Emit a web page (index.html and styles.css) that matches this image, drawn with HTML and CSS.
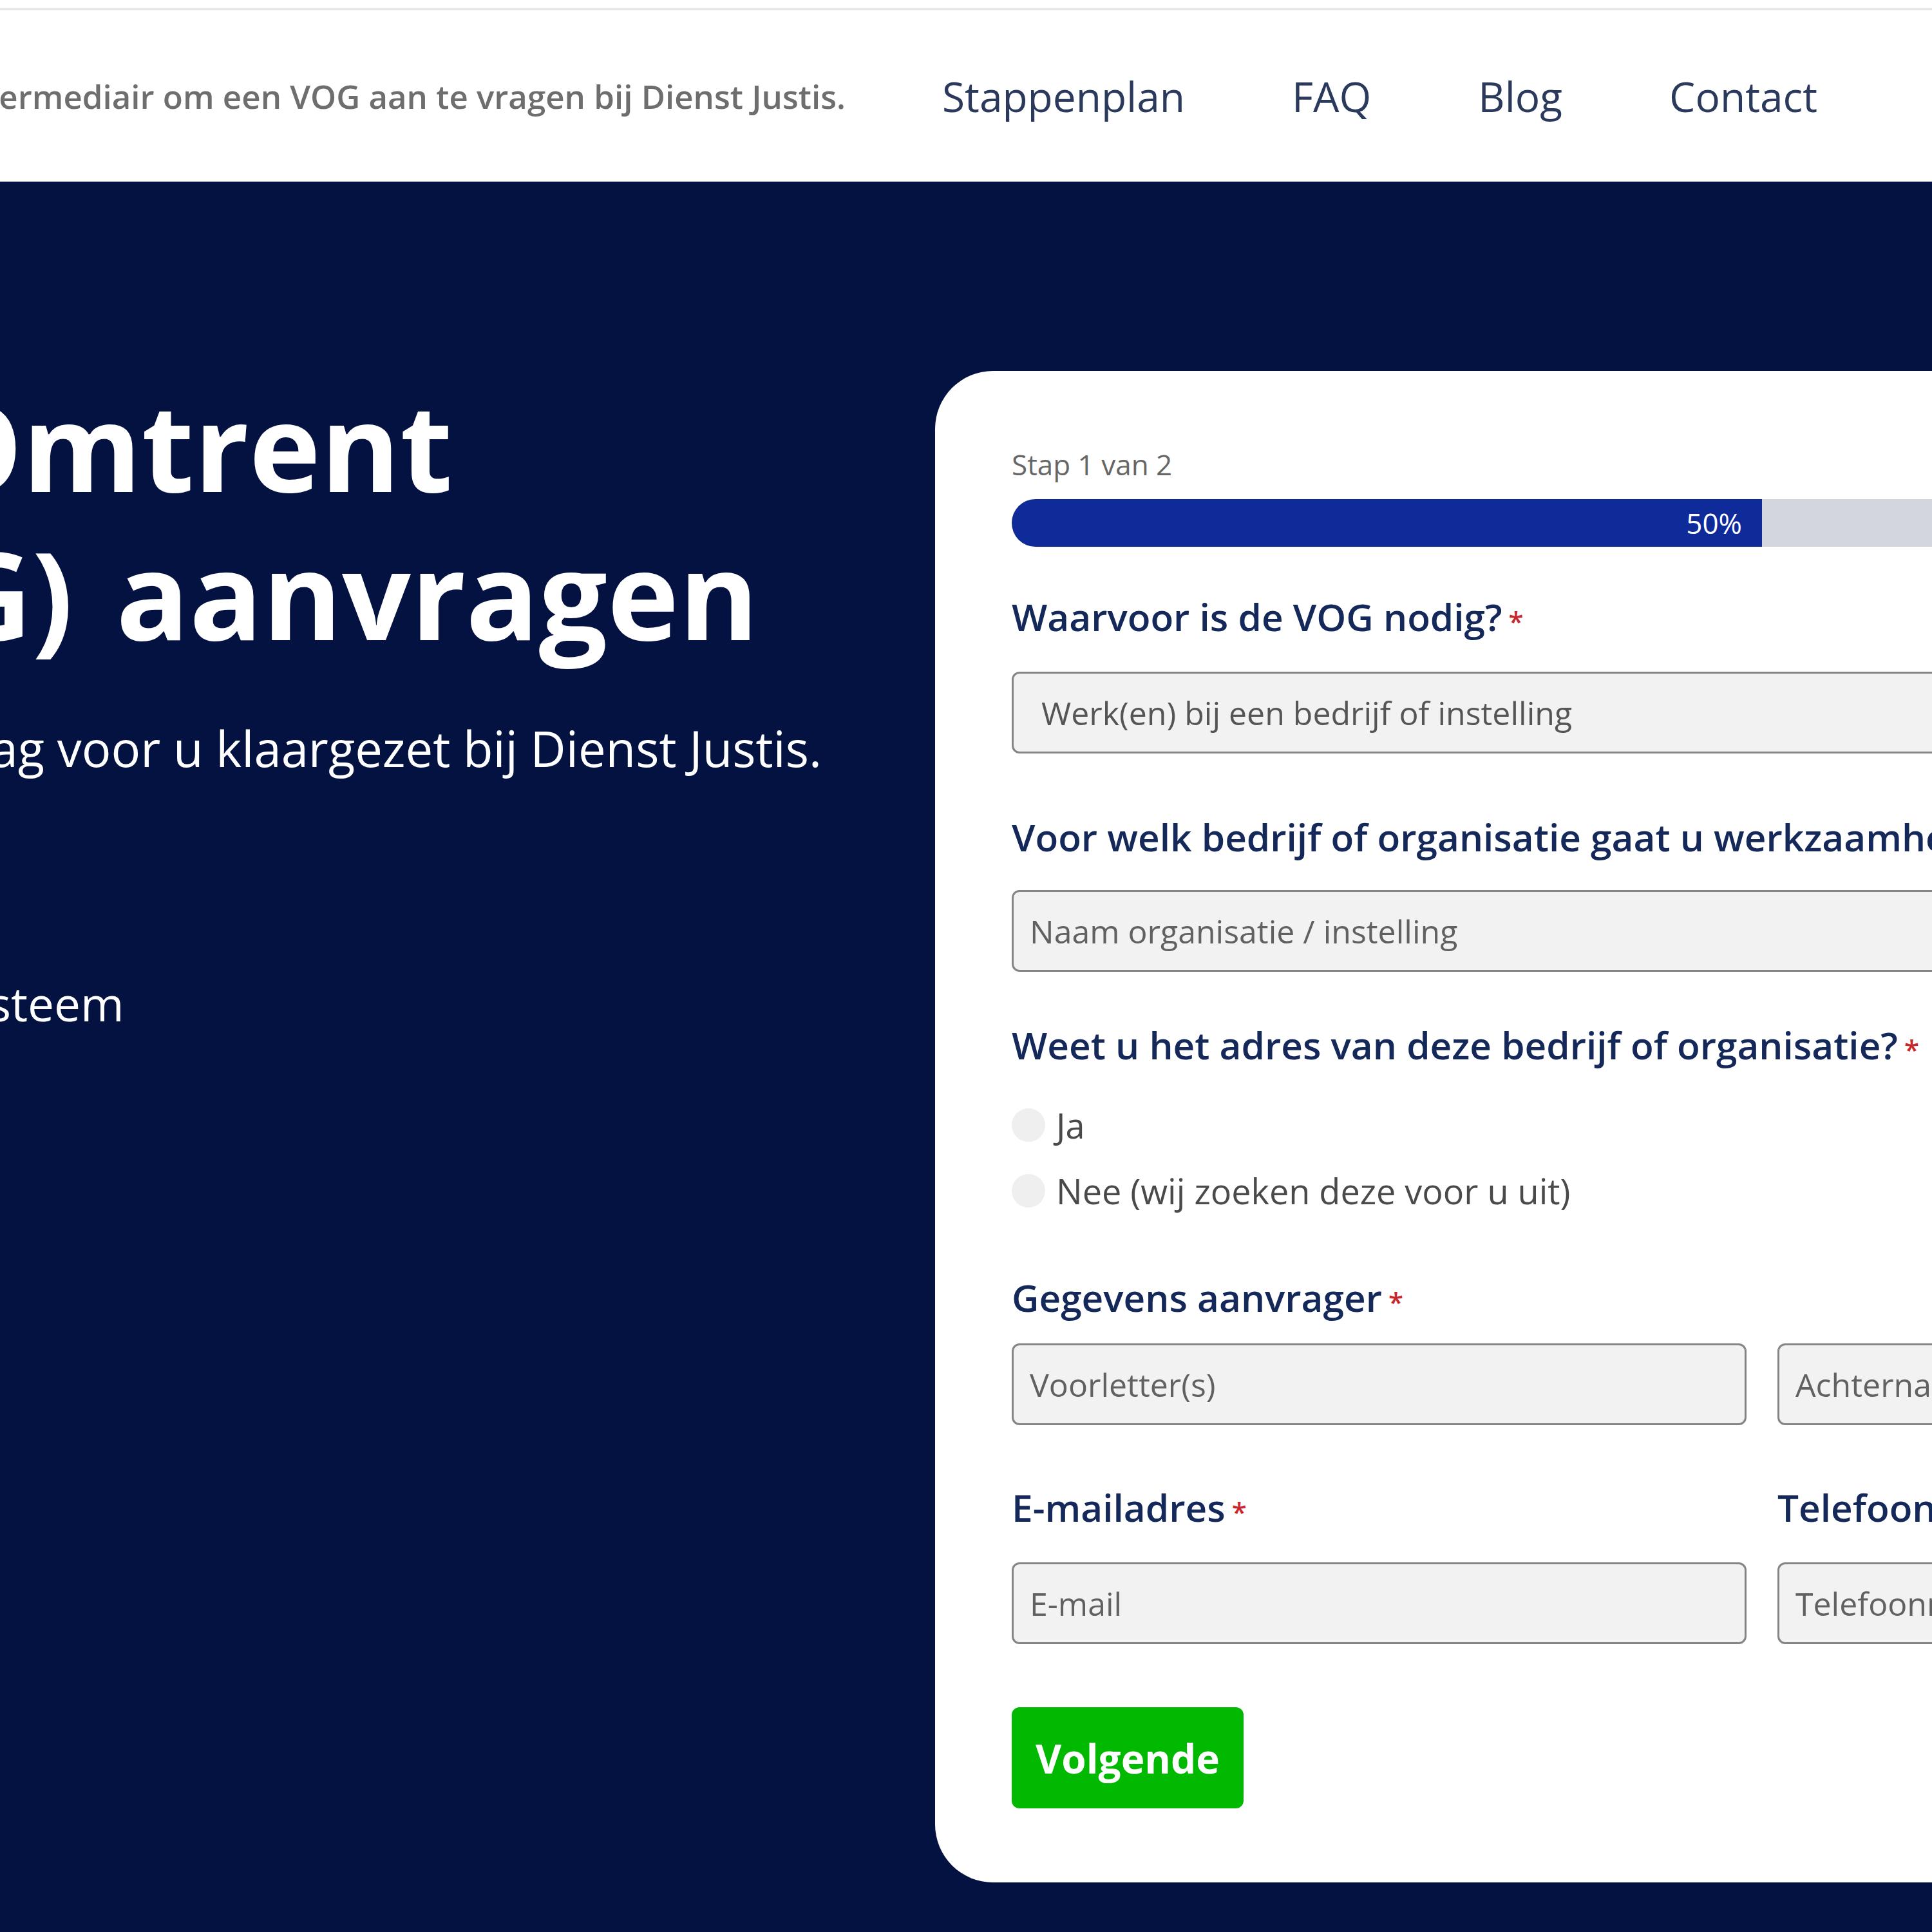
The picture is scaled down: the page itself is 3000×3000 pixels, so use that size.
FILE: index.html
```html
<!DOCTYPE html>
<html lang="nl">

<head>
    <meta charset="UTF-8" />
    <title>VOG aanvragen</title>
    <link rel="stylesheet" href="styles.css">
</head>

<body>

    <header class="site-header">
        <p class="tagline">VOG Aanvragen Online is uw intermediair om een VOG aan te vragen bij Dienst Justis.</p>
        <nav class="main-nav">
            <a href="#">Stappenplan</a>
            <a href="#">FAQ</a>
            <a href="#">Blog</a>
            <a href="#">Contact</a>
        </nav>
    </header>

    <section class="hero">
        <div class="hero-text">
            <h1>Verklaring Omtrent<br>Gedrag (VOG) aanvragen</h1>
            <p class="lead">Na uw betaling wordt uw aanvraag voor u klaargezet bij Dienst Justis.</p>
            <ul class="usps">
                <li>Snel geregeld</li>
                <li>Hulp bij elke stap</li>
                <li>Betalen via een beveiligd betaalsysteem</li>
            </ul>
        </div>

        <form class="form-card" onsubmit="return false">
            <div class="step">Stap 1 van 2</div>
            <div class="progress">
                <div class="progress-fill" style="width: 50%">50%</div>
            </div>

            <label class="field-label first">Waarvoor is de VOG nodig?<span class="req">*</span></label>
            <select class="control select">
                <option>Werk(en) bij een bedrijf of instelling</option>
                <option>Vrijwilligerswerk</option>
                <option>Stage of opleiding</option>
            </select>

            <label class="field-label">Voor welk bedrijf of organisatie gaat u werkzaamheden verrichten?<span class="req">*</span></label>
            <input class="control" type="text" placeholder="Naam organisatie / instelling">

            <label class="field-label tight">Weet u het adres van deze bedrijf of organisatie?<span class="req">*</span></label>
            <div class="choices">
                <label class="choice"><input type="radio" name="adres"> Ja</label>
                <label class="choice"><input type="radio" name="adres"> Nee (wij zoeken deze voor u uit)</label>
            </div>

            <label class="field-label wide">Gegevens aanvrager<span class="req">*</span></label>
            <div class="row close">
                <input class="control" type="text" placeholder="Voorletter(s)">
                <input class="control" type="text" placeholder="Achternaam">
            </div>

            <div class="row labels">
                <label class="field-label">E-mailadres<span class="req">*</span></label>
                <label class="field-label">Telefoonnummer<span class="req">*</span></label>
            </div>
            <div class="row">
                <input class="control" type="email" placeholder="E-mail">
                <input class="control" type="tel" placeholder="Telefoonnummer">
            </div>

            <button class="next" type="submit">Volgende</button>
        </form>
    </section>

</body>

</html>
```

FILE: styles.css
```css
* {
    box-sizing: border-box;
}

body {
    margin: 0;
    font-family: 'Open Sans', 'Noto Sans', sans-serif;
    background-color: #ffffff;
    overflow: hidden;
}

/* top bar */

.site-header {
    margin-top: 13px;
    border-top: 3px solid #e4e4e4;
    height: 269px;
    display: flex;
    justify-content: flex-end;
    align-items: center;
    gap: 150px;
    padding-right: 178px;
    background: #ffffff;
}

.tagline {
    margin: 0;
    flex-shrink: 0;
    white-space: nowrap;
    font-size: 51px;
    font-weight: 600;
    color: #6e6e6e;
}

.main-nav {
    display: flex;
    gap: 166px;
    flex-shrink: 0;
}

.main-nav a {
    font-size: 64px;
    color: #2b3a5c;
    text-decoration: none;
}

/* hero */

.hero {
    display: flex;
    align-items: flex-start;
    background-color: #031240;
    padding: 294px 0 200px;
    color: #ffffff;
}

.hero-text {
    flex: 0 0 2612px;
    margin-left: -1160px;
    white-space: nowrap;
}

.hero-text h1 {
    margin: 0;
    font-size: 188px;
    line-height: 230px;
    font-weight: 700;
    word-spacing: 18px;
}

.lead {
    margin: 74px 0 0;
    font-size: 76px;
    line-height: 104px;
}

.usps {
    list-style: none;
    margin: 99px 0 0;
    padding: 0;
    font-size: 73px;
    line-height: 98px;
}

/* form card */

.form-card {
    flex: 0 0 2568px;
    background: #ffffff;
    border-radius: 90px;
    padding: 112px 119px 115px;
    display: flex;
    flex-direction: column;
    align-items: stretch;
}

.step {
    font-size: 44px;
    line-height: 66px;
    color: #666666;
}

.progress {
    margin-top: 21px;
    height: 74px;
    background: #d3d6dc;
    border-radius: 37px;
    overflow: hidden;
}

.progress-fill {
    height: 100%;
    background: #0f2a99;
    color: #ffffff;
    font-size: 44px;
    line-height: 74px;
    text-align: right;
    padding-right: 31px;
}

.field-label {
    display: block;
    margin-top: 92px;
    font-size: 58.5px;
    line-height: 75px;
    font-weight: 600;
    color: #15285a;
    white-space: nowrap;
}

.field-label.first {
    margin-top: 71px;
}

.field-label.tight {
    margin-top: 76px;
}

.field-label.wide {
    margin-top: 98px;
}

.req {
    color: #c8282d;
    font-size: 42px;
    line-height: 1;
    margin-left: 10px;
}

.control {
    display: block;
    width: 100%;
    height: 127px;
    margin-top: 45px;
    padding: 0 25px;
    font-family: inherit;
    font-size: 50px;
    color: #555555;
    background: #f3f2f2;
    border: 3px solid #858585;
    border-radius: 12px;
    outline: none;
}

.control::placeholder {
    color: #616161;
}

.select {
    appearance: none;
    margin-top: 48px;
    padding-left: 43px;
}

.choices {
    display: flex;
    flex-direction: column;
    gap: 42px;
    margin-top: 57px;
}

.choice {
    display: flex;
    align-items: center;
    gap: 17px;
    height: 60px;
    font-size: 54px;
    color: #4a4a4a;
}

.choice input {
    appearance: none;
    margin: 0;
    width: 52px;
    height: 52px;
    border-radius: 50%;
    background: #efefef;
}

.row {
    display: grid;
    grid-template-columns: 1fr 1fr;
    gap: 48px;
}

.row .control {
    margin-top: 48px;
}

.row.close .control {
    margin-top: 34px;
}

.row.labels .field-label {
    margin-top: 90px;
}

.next {
    align-self: flex-start;
    margin-top: 98px;
    height: 157px;
    padding: 0 37px;
    font-family: inherit;
    font-size: 62px;
    font-weight: 700;
    color: #ffffff;
    background-color: #00b900;
    border: none;
    border-radius: 12px;
    cursor: pointer;
}
```
